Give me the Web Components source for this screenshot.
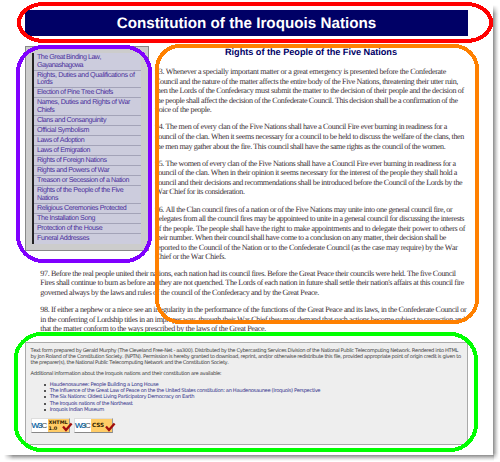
<!DOCTYPE html>
<html lang="en">
<head>
<meta charset="utf-8">
<title>Constitution of the Iroquois Nations</title>
<style>
html,body{margin:0;background:#fff}
body{width:500px;height:462px;overflow:hidden}
</style>
</head>
<body>
<doc-page>
  <page-banner><fit-line w="259.5">Constitution of the Iroquois Nations</fit-line></page-banner>
  <page-columns>
    <side-nav slot="nav">
      <nav-item><fit-line w="64">The Great Binding Law,</fit-line><fit-line w="46">Gayanashagowa</fit-line></nav-item>
      <nav-item><fit-line w="97.5">Rights, Duties and Qualifications of</fit-line><fit-line w="15.3">Lords</fit-line></nav-item>
      <nav-item><fit-line w="76">Election of Pine Tree Chiefs</fit-line></nav-item>
      <nav-item><fit-line w="93">Names, Duties and Rights of War</fit-line><fit-line w="17.3">Chiefs</fit-line></nav-item>
      <nav-item><fit-line w="69">Clans and Consanguinity</fit-line></nav-item>
      <nav-item><fit-line w="52">Official Symbolism</fit-line></nav-item>
      <nav-item><fit-line w="47.3">Laws of Adoption</fit-line></nav-item>
      <nav-item><fit-line w="53">Laws of Emigration</fit-line></nav-item>
      <nav-item><fit-line w="69.7">Rights of Foreign Nations</fit-line></nav-item>
      <nav-item><fit-line w="72.3">Rights and Powers of War</fit-line></nav-item>
      <nav-item><fit-line w="92">Treason or Secession of a Nation</fit-line></nav-item>
      <nav-item><fit-line w="86.3">Rights of the People of the Five</fit-line><fit-line w="21">Nations</fit-line></nav-item>
      <nav-item><fit-line w="89.3">Religious Ceremonies Protected</fit-line></nav-item>
      <nav-item><fit-line w="58">The Installation Song</fit-line></nav-item>
      <nav-item><fit-line w="65.3">Protection of the House</fit-line></nav-item>
      <nav-item><fit-line w="52">Funeral Addresses</fit-line></nav-item>
    </side-nav>
    <section-title><fit-line w="172">Rights of the People of the Five Nations</fit-line></section-title>
    <text-block style="--gap:9px">
      <fit-line w="291">93. Whenever a specially important matter or a great emergency is presented before the Confederate</fit-line>
      <fit-line w="303">Council and the nature of the matter affects the entire body of the Five Nations, threatening their utter ruin,</fit-line>
      <fit-line w="308.7">then the Lords of the Confederacy must submit the matter to the decision of their people and the decision of</fit-line>
      <fit-line w="302.7">the people shall affect the decision of the Confederate Council. This decision shall be a confirmation of the</fit-line>
      <fit-line w="56.5">voice of the people.</fit-line>
    </text-block>
    <text-block style="--gap:7.7px">
      <fit-line w="292">94. The men of every clan of the Five Nations shall have a Council Fire ever burning in readiness for a</fit-line>
      <fit-line w="309">council of the clan. When it seems necessary for a council to be held to discuss the welfare of the clans, then</fit-line>
      <fit-line w="290.3">the men may gather about the fire. This council shall have the same rights as the council of the women.</fit-line>
    </text-block>
    <text-block style="--gap:7.7px">
      <fit-line w="300.7">95. The women of every clan of the Five Nations shall have a Council Fire ever burning in readiness for a</fit-line>
      <fit-line w="302">council of the clan. When in their opinion it seems necessary for the interest of the people they shall hold a</fit-line>
      <fit-line w="307.3">council and their decisions and recommendations shall be introduced before the Council of the Lords by the</fit-line>
      <fit-line w="89.5">War Chief for its consideration.</fit-line>
    </text-block>
    <text-block style="--gap:7.7px">
      <fit-line w="297.3">96. All the Clan council fires of a nation or of the Five Nations may unite into one general council fire, or</fit-line>
      <fit-line w="309">delegates from all the council fires may be appointeed to unite in a general council for discussing the interests</fit-line>
      <fit-line w="310">of the people. The people shall have the right to make appointments and to delegate their power to others of</fit-line>
      <fit-line w="291">their number. When their council shall have come to a conclusion on any matter, their decision shall be</fit-line>
      <fit-line w="302.7">reported to the Council of the Nation or to the Confederate Council (as the case may require) by the War</fit-line>
      <fit-line w="70.7">Chief or the War Chiefs.</fit-line>
    </text-block>
  </page-columns>
  <wide-text>
    <text-block style="--gap:0px">
      <fit-line w="415.4">97. Before the real people united their nations, each nation had its council fires. Before the Great Peace their councils were held. The five Council</fit-line>
      <fit-line w="423.7">Fires shall continue to burn as before and they are not quenched. The Lords of each nation in future shall settle their nation's affairs at this council fire</fit-line>
      <fit-line w="278.7">governed always by the laws and rules of the council of the Confederacy and by the Great Peace.</fit-line>
    </text-block>
    <text-block style="--gap:8px">
      <fit-line w="426">98. If either a nephew or a niece see an irregularity in the performance of the functions of the Great Peace and its laws, in the Confederate Council or</fit-line>
      <fit-line w="424.7">in the conferring of Lordship titles in an improper way, through their War Chief they may demand that such actions become subject to correction and</fit-line>
      <fit-line w="225.7">that the matter conform to the ways prescribed by the laws of the Great Peace.</fit-line>
    </text-block>
  </wide-text>
  <page-footer>
    <fit-line w="427.5">Text form prepared by Gerald Murphy (The Cleveland Free-Net - aa300). Distributed by the Cybercasting Services Division of the National Public Telecomputing Network. Rendered into HTML</fit-line>
    <fit-line w="430.2">by Jon Roland of the Constitution Society. (NPTN). Permission is hereby granted to download, reprint, and/or otherwise redistribute this file, provided appropriate point of origin credit is given to</fit-line>
    <fit-line w="198">the preparer(s), the National Public Telecomputing Network and the Constitution Society.</fit-line>
    <fit-line w="190.7" style="margin-top:4.7px">Additional information about the Iroquois nations and their constitution are available:</fit-line>
    <link-item slot="links"><fit-line w="108.8">Haudenosaunee: People Building a Long House</fit-line></link-item>
    <link-item slot="links"><fit-line w="270.5">The Influence of the Great Law of Peace on the the United States constitution: an Haudenosaunee (Iroquois) Perspective</fit-line></link-item>
    <link-item slot="links"><fit-line w="144.5">The Six Nations: Oldest Living Participatory Democracy on Earth</fit-line></link-item>
    <link-item slot="links"><fit-line w="82.8">The Iroquois nations of the Northeast</fit-line></link-item>
    <link-item slot="links"><fit-line w="54.2">Iroquois Indian Museum</fit-line></link-item>
    <valid-badge slot="badges"><span>XHTML</span><span>1.0</span></valid-badge>
    <valid-badge slot="badges" wide><span>CSS</span></valid-badge>
  </page-footer>
  <region-outlines slot="overlay"></region-outlines>
</doc-page>

<script>
const define = (name, html, setup) => customElements.define(name, class extends HTMLElement {
  constructor() {
    super();
    this.attachShadow({mode: 'open'}).innerHTML = html;
  }
  connectedCallback() { if (setup) setup(this, this.shadowRoot); }
});

define('doc-page', `<style>
:host{display:block;position:relative;width:500px;height:462px;background:#fff}
.sheet{box-sizing:border-box;width:493px;height:455px;padding:10px 25px 0 25px;background:#fff}
.right,.bottom{position:absolute}
.right{left:493px;top:5px;width:6px;height:455px;background:linear-gradient(90deg,#8c8c8c,#b4b4b4 30%,#e2e2e2 65%,#fff);-webkit-mask:linear-gradient(#0000,#000 9px,#000 448px,#0000)}
.bottom{left:4px;top:455px;width:490px;height:6px;background:linear-gradient(#8c8c8c,#b4b4b4 30%,#e2e2e2 65%,#fff);-webkit-mask:linear-gradient(90deg,#0000,#000 9px)}
</style><div class="right"></div><div class="bottom"></div><div class="sheet"><slot></slot></div><slot name="overlay"></slot>`);

define('page-banner', `<style>
:host{display:flex;justify-content:center;box-sizing:border-box;width:443px;height:26px;padding-top:1px;background:#006;color:#fff;
font:bold 15.2px/26px "Liberation Sans",Arial,sans-serif}</style><slot></slot>`);

define('page-columns', `<style>
:host{display:flex;align-items:flex-start;padding-top:10px;height:216px;box-sizing:border-box}
.main{margin-left:6px;width:312px}</style><slot name="nav"></slot><div class="main"><slot></slot></div>`);

define('side-nav', `<style>
:host{display:block;box-sizing:border-box;flex:none;width:124px;height:205px;padding:6px 7px 6px 6px;background:#ccc;border:1px solid #888}
.list{border-left:2px solid #222;height:191px;background:#ccd}
</style><div class="list"><slot></slot></div>`);

define('nav-item', `<style>
:host{display:block;box-sizing:border-box;padding:1px 0 .3px 3px;border-bottom:1px solid #a3a3b8;
color:#4a2f9c;font:7.1px/7.7px "Liberation Sans",Arial,sans-serif}
:host(:last-child){border-bottom-color:#ccd}</style><slot></slot>`);

define('section-title', `<style>
:host{display:flex;justify-content:center;height:12px;color:#006;font:bold 9.2px/12px "Liberation Sans",Arial,sans-serif}
</style><slot></slot>`);

define('text-block', `<style>
:host{display:block;margin-top:var(--gap);color:#3b2f35;font:8.1px/9.55px "Liberation Serif","Times New Roman",serif}
</style><slot></slot>`);

define('wide-text', `<style>:host{display:block;padding:16.5px 0 0 15.3px;height:90px;box-sizing:border-box}</style><slot></slot>`);

define('page-footer', `<style>
:host{display:block;box-sizing:border-box;width:443px;height:103px;padding:4.5px 0 0 4.5px;background:#eee;border:1px solid #aaa;
color:#444;font:5.2px/6.3px "DejaVu Sans",Verdana,sans-serif}
.links{padding:4.4px 0 0 13px}
.badges{display:flex;gap:3.5px;padding-top:5px}
</style><slot></slot><div class="links"><slot name="links"></slot></div><div class="badges"><slot name="badges"></slot></div>`);

define('link-item', `<style>
:host{display:flex;align-items:center;height:6.25px;color:#33338c}
i{width:2px;height:2px;border-radius:1px;background:#222;margin-right:4.2px}
</style><i></i><slot></slot>`);

define('valid-badge', `<style>
:host{display:block;position:relative;width:40px;height:15px;box-sizing:border-box}
.face{display:flex;box-sizing:border-box;width:39px;height:15px;background:#fff;border:1px solid;border-color:#ddd #999 #888 #ddd}
.mark{display:flex;width:16px;align-items:center;font:8px/13px "Liberation Sans",Arial,sans-serif;color:#005a9c;letter-spacing:-1px;-webkit-text-stroke:.2px #005a9c}
.mark b{font-weight:400;color:#444;-webkit-text-stroke:0}
.label{display:flex;flex:1;flex-direction:column;justify-content:center;background:#fc6;padding-left:1px;
color:#332200;font:bold 4.9px/5.4px "DejaVu Sans",Verdana,sans-serif}
:host([wide]) .label{font-size:5.7px}
svg{position:absolute;left:31px;top:4px;overflow:visible}
</style><div class="face"><div class="mark">W3<b>C</b></div><div class="label"><slot></slot></div></div>
<svg width="11" height="10"><path d="M1 4.5 L4 8 L9.6 1.5" fill="none" stroke="#a00e0e" stroke-width="2.3"/></svg>`);

define('region-outlines', `<style>:host{position:absolute;inset:0;display:block}svg{display:block}</style>
<svg width="500" height="462" fill="none" stroke-width="4" shape-rendering="crispEdges">
<rect x="19" y="4" width="472" height="37" rx="25" ry="18.5" stroke="#f00"/>
<rect x="18" y="47" width="132" height="214" rx="25" stroke="#8000ff"/>
<rect x="157" y="46" width="320" height="276" rx="23" stroke="#ff8000"/>
<rect x="15.5" y="334" width="460.5" height="116" rx="26" stroke="#0f0"/>
</svg>`);

/* One line of text, spaced so that its run is exactly "w" pixels wide. */
define('fit-line', `<style>
:host{display:block;white-space:nowrap;text-rendering:geometricPrecision;font-kerning:none}
span{display:inline-block;height:1lh;vertical-align:top}</style><span><slot></slot></span>`, (el, root) => {
  const span = root.querySelector('span');
  const chars = el.textContent.length;
  span.style.letterSpacing = '0px';
  const natural = span.getBoundingClientRect().width;
  const target = parseFloat(el.getAttribute('w'));
  span.style.letterSpacing = ((target - natural) / chars) + 'px';
});
/* Measure again once every ancestor's font applies. */
customElements.whenDefined('fit-line').then(() => document.querySelectorAll('fit-line').forEach(e => e.connectedCallback()));
</script>
</body>
</html>
